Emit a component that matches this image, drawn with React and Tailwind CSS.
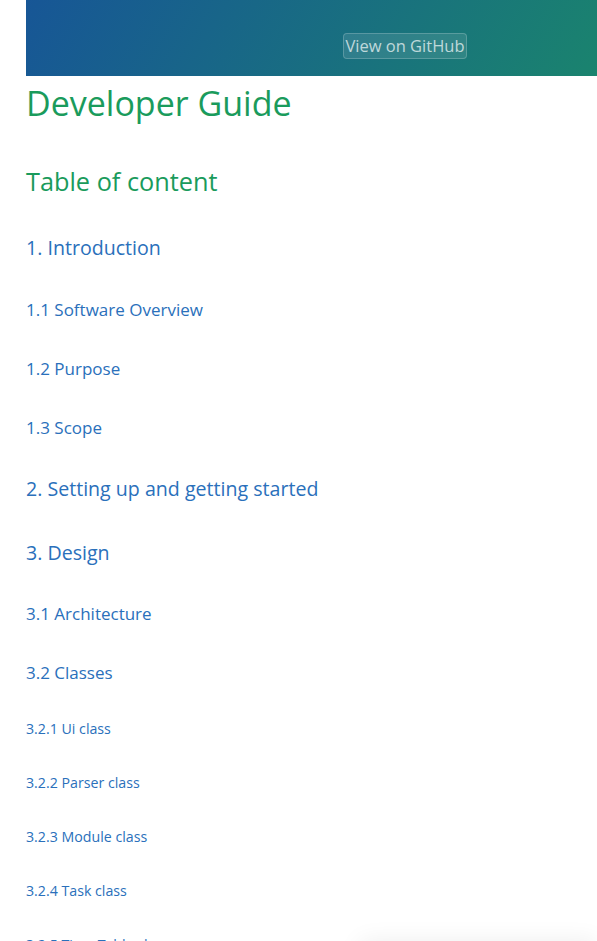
import React from "react";

const items = [
  { t: "1. Introduction", lvl: 3, mt: "mt-[37px]" },
  { t: "1.1 Software Overview", lvl: 4, mt: "mt-[36px]" },
  { t: "1.2 Purpose", lvl: 4, mt: "mt-[35px]" },
  { t: "1.3 Scope", lvl: 4, mt: "mt-[35px]" },
  { t: "2. Setting up and getting started", lvl: 3, mt: "mt-[35px]" },
  { t: "3. Design", lvl: 3, mt: "mt-[36px]" },
  { t: "3.1 Architecture", lvl: 4, mt: "mt-[35px]" },
  { t: "3.2 Classes", lvl: 4, mt: "mt-[35px]" },
  { t: "3.2.1 Ui class", lvl: 5, mt: "mt-[34px]" },
  { t: "3.2.2 Parser class", lvl: 5, mt: "mt-[34px]" },
  { t: "3.2.3 Module class", lvl: 5, mt: "mt-[34px]" },
  { t: "3.2.4 Task class", lvl: 5, mt: "mt-[34px]" },
  { t: "3.2.5 Time Table class", lvl: 5, mt: "mt-[34px]" },
];

const lvlCls = {
  3: "text-[19.6px] leading-[28px]",
  4: "text-[17px] leading-[24px]",
  5: "text-[14.2px] leading-[20px]",
};

export default function App() {
  return (
    <div
      className="relative w-[597px] h-[941px] overflow-hidden bg-white"
      style={{ fontFamily: '"Open Sans", "Noto Sans", sans-serif' }}
    >
      <div className="pl-[26px]">
        <header className="w-[758px] h-[76px] flex items-start justify-center pt-[33px] bg-[linear-gradient(120deg,#175696,#1b9162)]">
          <a className="h-[26px] px-[1px] flex items-center rounded-[4px] border border-white/20 bg-white/10 text-white/70 text-[16.5px]">
            View on GitHub
          </a>
        </header>
        <h1 className="mt-[7px] text-[34px] leading-[40px] text-[#1a9b5c]">Developer Guide</h1>
        <h2 className="mt-[42px] text-[25.3px] leading-[32px] text-[#1a9b5c]">Table of content</h2>
        {items.map((it) => (
          <div key={it.t} className={`${it.mt} ${lvlCls[it.lvl]} text-[#2a70bb] whitespace-nowrap`}>
            {it.t}
          </div>
        ))}
      </div>
      <div className="absolute left-[360px] right-0 top-[941px] h-[40px] shadow-[0_0_24px_rgba(0,0,0,0.07)]" />
    </div>
  );
}
